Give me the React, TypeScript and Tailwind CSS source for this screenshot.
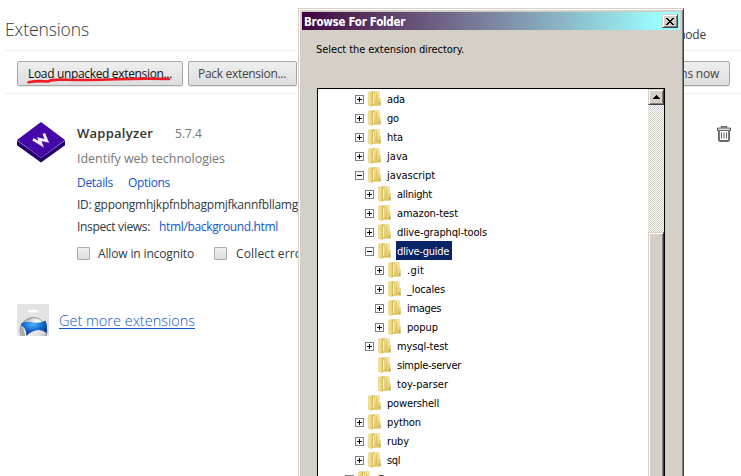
import { useLayoutEffect, useRef, useState } from 'react';
import type { ReactNode } from 'react';

/* Text whose tracking is adjusted so that it spans a given width. */
function Fit({ w, className = '', children }: { w: number; className?: string; children: ReactNode }) {
  const ref = useRef<HTMLSpanElement>(null);
  const [gap, setGap] = useState(0);
  useLayoutEffect(() => {
    const el = ref.current;
    if (!el) return;
    const n = (el.textContent ?? '').length;
    setGap((w - el.getBoundingClientRect().width) / n);
  }, [w]);
  return (
    <span ref={ref} className={`inline-block whitespace-pre ${className}`} style={{ letterSpacing: gap }}>
      {children}
    </span>
  );
}

type Row = { name: string; level: number; w: number; sign?: '+' | '-'; selected?: boolean };

const rows: Row[] = [
  { name: 'ada', level: 1, w: 18, sign: '+' },
  { name: 'go', level: 1, w: 12, sign: '+' },
  { name: 'hta', level: 1, w: 16, sign: '+' },
  { name: 'java', level: 1, w: 21, sign: '+' },
  { name: 'javascript', level: 1, w: 48, sign: '-' },
  { name: 'allnight', level: 2, w: 35, sign: '+' },
  { name: 'amazon-test', level: 2, w: 61, sign: '+' },
  { name: 'dlive-graphql-tools', level: 2, w: 90, sign: '+' },
  { name: 'dlive-guide', level: 2, w: 52, sign: '-', selected: true },
  { name: '.git', level: 3, w: 17, sign: '+' },
  { name: '_locales', level: 3, w: 38, sign: '+' },
  { name: 'images', level: 3, w: 34, sign: '+' },
  { name: 'popup', level: 3, w: 31, sign: '+' },
  { name: 'mysql-test', level: 2, w: 51, sign: '+' },
  { name: 'simple-server', level: 2, w: 64 },
  { name: 'toy-parser', level: 2, w: 51 },
  { name: 'powershell', level: 1, w: 52 },
  { name: 'python', level: 1, w: 34, sign: '+' },
  { name: 'ruby', level: 1, w: 22, sign: '+' },
  { name: 'sql', level: 1, w: 13, sign: '+' },
  { name: 'G', level: 0, w: 8, sign: '-' },
];

const indents = ['pl-[27px]', 'pl-[37px]', 'pl-[47px]', 'pl-[57px]'];

function Folder() {
  return (
    <svg width="14" height="16" viewBox="0 0 14 16" className="ml-[4px] shrink-0">
      <defs>
        <linearGradient id="front" x1="0" x2="1" y1="0" y2="0">
          <stop offset="0" stopColor="#f3e49a" />
          <stop offset=".55" stopColor="#ecd87c" />
          <stop offset="1" stopColor="#d9bf58" />
        </linearGradient>
        <linearGradient id="back" x1="0" x2="0" y1="0" y2="1">
          <stop offset="0" stopColor="#f7eeb4" />
          <stop offset="1" stopColor="#dfc258" />
        </linearGradient>
      </defs>
      <path d="M4 .5h7.300v6.200l1.200.8v7H5z" fill="url(#back)" stroke="#e8d68c" strokeWidth=".7" />
      <path d="M7.800 1.500h1.300v12.800H7.800z" fill="#e0c564" />
      <path d="M.5 1 5.300.4v13.800L3.800 15.700.5 14.500z" fill="url(#front)" stroke="#e6d27e" strokeWidth=".6" />
      <path d="M4.200 1.700 6.700.8v12.400l-2.500 2z" fill="#d2b354" />
      <path d="M5 2.500 6.300 2v10.700L5 13.700z" fill="#fdf8d8" />
      <path d="M11.800 11.500v2.200" stroke="#4faac0" />
    </svg>
  );
}

function Sign({ kind }: { kind?: '+' | '-' }) {
  if (!kind) return <span className="w-[9px] shrink-0" />;
  return (
    <svg width="9" height="9" viewBox="0 0 9 9" shapeRendering="crispEdges" className="mt-[2px] shrink-0">
      <rect x=".5" y=".5" width="8" height="8" fill="#fff" stroke="#808080" />
      <path d={kind === '+' ? 'M2 4.5h5M4.5 2v5' : 'M2 4.5h5'} stroke="#000" />
    </svg>
  );
}

function TreeRow({ row }: { row: Row }) {
  return (
    <div className={`flex h-[19px] shrink-0 items-center ${indents[row.level]}`}>
      <Sign kind={row.sign} />
      <Folder />
      <span
        className={`ml-[4px] flex h-[19px] items-center pt-[3px] pr-[3px] pl-px ${row.selected ? 'bg-[#0a246a] text-white' : 'text-black'}`}
      >
        <Fit w={row.w}>{row.name}</Fit>
      </span>
    </div>
  );
}

const raised =
  'border border-t-[#d4d0c8] border-l-[#d4d0c8] border-r-[#404040] border-b-[#404040] bg-[#d4d0c8] shadow-[inset_1px_1px_0_#fff,inset_-1px_-1px_0_#808080]';

function Dialog() {
  return (
    <div
      className={`absolute top-[8px] left-[298px] flex h-[480px] w-[386px] flex-col p-[3px] font-['DejaVu_Sans_Condensed','DejaVu_Sans',sans-serif] text-[11px] text-black ${raised}`}
    >
      <div className="flex h-[18px] shrink-0 items-center justify-between bg-linear-to-r from-[#400040] to-[#99ffff] to-95% pr-[2px] pl-[2px] font-bold text-white">
        <Fit w={101} className="pt-px text-[11.500px] leading-[18px]">Browse For Folder</Fit>
        <div className={`flex h-[14px] w-[16px] items-center justify-center ${raised}`}>
          <svg width="8" height="7" viewBox="0 0 8 7" shapeRendering="crispEdges">
            <path
              d="M0 0h2v1h1v1h2V1h1V0h2v1H7v1H6v1H5v1h1v1h1v1h1v1H6V6H5V5H3v1H2v1H0V6h1V5h1V4h1V3H2V2H1V1H0z"
              fill="#000"
            />
          </svg>
        </div>
      </div>
      <div className="flex h-[58px] shrink-0 items-start pt-[12px] pl-[14px] leading-[16px]">
        <Fit w={148}>Select the extension directory.</Fit>
      </div>
      <div className="ml-[15px] flex h-[400px] w-[348px] shrink-0 overflow-hidden border border-black bg-white">
        <div className="flex grow flex-col">
          {rows.map((row) => (
            <TreeRow key={row.name} row={row} />
          ))}
        </div>
        <div className="flex w-[16px] shrink-0 flex-col bg-white bg-[conic-gradient(#d4d0c8_25%,#fff_0_50%,#d4d0c8_0_75%,#fff_0)] bg-size-[2px_2px]">
          <div className={`flex h-[16px] shrink-0 items-center justify-center ${raised}`}>
            <svg width="7" height="4" viewBox="0 0 7 4" shapeRendering="crispEdges">
              <path d="M3 0h1v1h1v1h1v1h1v1H0V3h1V2h1V1h1z" fill="#000" />
            </svg>
          </div>
          <div className="h-[127px] shrink-0" />
          <div className={`grow ${raised}`} />
        </div>
      </div>
    </div>
  );
}

const button =
  'flex h-[25px] items-center rounded-[2px] border border-[#a6a6a6] bg-linear-to-b from-[#efefef] to-[#dedede] shadow-[0_1px_0_rgba(0,0,0,0.08)]';

function Checkbox() {
  return (
    <span className="h-[13px] w-[13px] shrink-0 rounded-[1px] border border-[#acacac] bg-linear-to-b from-[#f0f0f0] to-[#dedede]" />
  );
}

function WappalyzerLogo() {
  return (
    <svg width="48" height="41" viewBox="0 0 48 41" className="shrink-0">
      <path d="M0 18.500 24 36l24-17.500v4.800L24 40.500 0 23.300z" fill="#23006b" />
      <path d="M24 0 48 18 24 36 0 18z" fill="#4507a8" />
      <path
        d="M16 17.200 24.200 22.200 22.300 17.200 29.800 18.800 26.800 11.500"
        fill="none"
        stroke="#f4efff"
        strokeWidth="2.800"
      />
    </svg>
  );
}

function Trash() {
  return (
    <svg width="14" height="16" viewBox="0 0 14 16" fill="none" stroke="#666" className="shrink-0">
      <path d="M4.500 2V.8h5V2" strokeWidth="1.400" />
      <path d="M.5 4.500V3.300Q.5 2 2 2h10q1.500 0 1.500 1.300v1.200z" fill="#ddd" strokeWidth="1.200" />
      <path d="M1.900 5v8.300q0 1.700 1.700 1.700h6.800q1.700 0 1.700-1.700V5" strokeWidth="1.900" />
      <path d="M4.500 6.500v6M7 6.500v6M9.500 6.500v6" strokeWidth="1.100" />
    </svg>
  );
}

function StoreIcon() {
  return (
    <svg width="32" height="32" viewBox="0 0 32 32" className="shrink-0">
      <defs>
        <radialGradient id="blue" cx=".45" cy=".25" r=".7">
          <stop offset="0" stopColor="#50b4ff" />
          <stop offset=".5" stopColor="#176fd0" />
          <stop offset="1" stopColor="#07377f" />
        </radialGradient>
        <linearGradient id="silver" x1="0" x2="1" y1="0" y2="1">
          <stop offset="0" stopColor="#777" />
          <stop offset=".35" stopColor="#f8f8f8" />
          <stop offset=".7" stopColor="#ddd" />
          <stop offset="1" stopColor="#777" />
        </linearGradient>
        <clipPath id="tile">
          <path d="M0 0h32v32H0z" />
        </clipPath>
      </defs>
      <g clipPath="url(#tile)">
        <path d="M0 0h32v32H0z" fill="#e4e4e4" />
        <rect x="11" y="6" width="10" height="2.500" rx="1" fill="#fff" />
        <circle cx="16.500" cy="27" r="13.500" fill="url(#silver)" stroke="#777" strokeWidth=".7" />
        <path d="M4.500 19q6-2 12.500-.5 7 1 11.500-2 2.500 6 1 12.500-5-4-11-2.500-6 1.500-9 5.500 0-8-5.500-10.500z" fill="url(#blue)" />
        <path d="M3.500 22q4.500 3 4.500 10H4.500z" fill="#aaa" />
      </g>
    </svg>
  );
}

export default function App() {
  return (
    <div className="relative h-[476px] w-[741px] overflow-hidden bg-white font-['Open_Sans','Noto_Sans',sans-serif] text-[12px] text-[#303942]">
      <div className="ml-[5px] flex h-[51px] items-start justify-between border-b border-[#eee] pr-[35px]">
        <Fit w={84} className="mt-[17px] text-[17.500px] leading-[24px] font-light">Extensions</Fit>
        <Fit w={90} className="mt-[26px] text-right leading-[18px]">Developer mode</Fit>
      </div>
      <div className="ml-[5px] flex h-[43px] items-start border-b border-[#eee] pt-[10px] pr-[11px] pl-[12px]">
        <div className={`${button} relative w-[166px] pl-[10px] text-[#111]`}>
          <Fit w={144}>Load unpacked extension...</Fit>
          <svg width="146" height="8" viewBox="0 0 146 8" className="absolute top-[14px] left-[9px]">
            <path
              d="M1.500 6.300Q10 4.500 21 5.500Q24 3 40 3.800Q65 4.500 90 3.300T142 3"
              fill="none"
              stroke="#ed1c24"
              strokeWidth="2.600"
              strokeLinecap="round"
            />
          </svg>
        </div>
        <div className={`${button} ml-[5px] w-[109px] pl-[9px] text-[#444]`}>
          <Fit w={88}>Pack extension...</Fit>
        </div>
        <div className={`${button} ml-auto w-[160px] justify-end pr-[10px] text-[#444]`}>
          <Fit w={127}>Update extensions now</Fit>
        </div>
      </div>
      <div className="flex h-[210px] pt-[28px] pr-[10px] pl-[17px]">
        <WappalyzerLogo />
        <div className="ml-[12px] flex grow flex-col">
          <div className="flex h-[24px] items-center">
            <Fit w={76} className="text-[13px] font-semibold text-[#333]">Wappalyzer</Fit>
            <Fit w={27} className="ml-[22px] text-[#777]">5.7.4</Fit>
          </div>
          <div className="flex h-[25px] items-center pt-px text-[#777]">
            <Fit w={148} className="text-[12.500px]">Identify web technologies</Fit>
          </div>
          <div className="flex h-[24px] items-center text-[#1155cc]">
            <Fit w={36}>Details</Fit>
            <Fit w={42} className="ml-[15px]">Options</Fit>
          </div>
          <div className="flex h-[20px] items-center">
            <Fit w={221}>ID: gppongmhjkpfnbhagpmjfkannfbllamg</Fit>
          </div>
          <div className="flex h-[22px] items-center pt-px">
            <Fit w={73}>Inspect views:</Fit>
            <Fit w={119} className="ml-[9px] text-[#1155cc]">html/background.html</Fit>
          </div>
          <div className="flex h-[33px] items-center">
            <Checkbox />
            <Fit w={96} className="ml-[8px]">Allow in incognito</Fit>
            <span className="ml-[20px] flex items-center">
              <Checkbox />
              <Fit w={77} className="ml-[9px]">Collect errors</Fit>
            </span>
          </div>
        </div>
        <div className="pt-[4px]">
          <Trash />
        </div>
      </div>
      <div className="flex h-[32px] items-center pl-[17px]">
        <StoreIcon />
        <Fit w={136} className="mt-[2px] ml-[10px] text-[14.500px] leading-[20px] font-light text-[#1155cc] underline underline-offset-2">
          Get more extensions
        </Fit>
      </div>
      <Dialog />
    </div>
  );
}
